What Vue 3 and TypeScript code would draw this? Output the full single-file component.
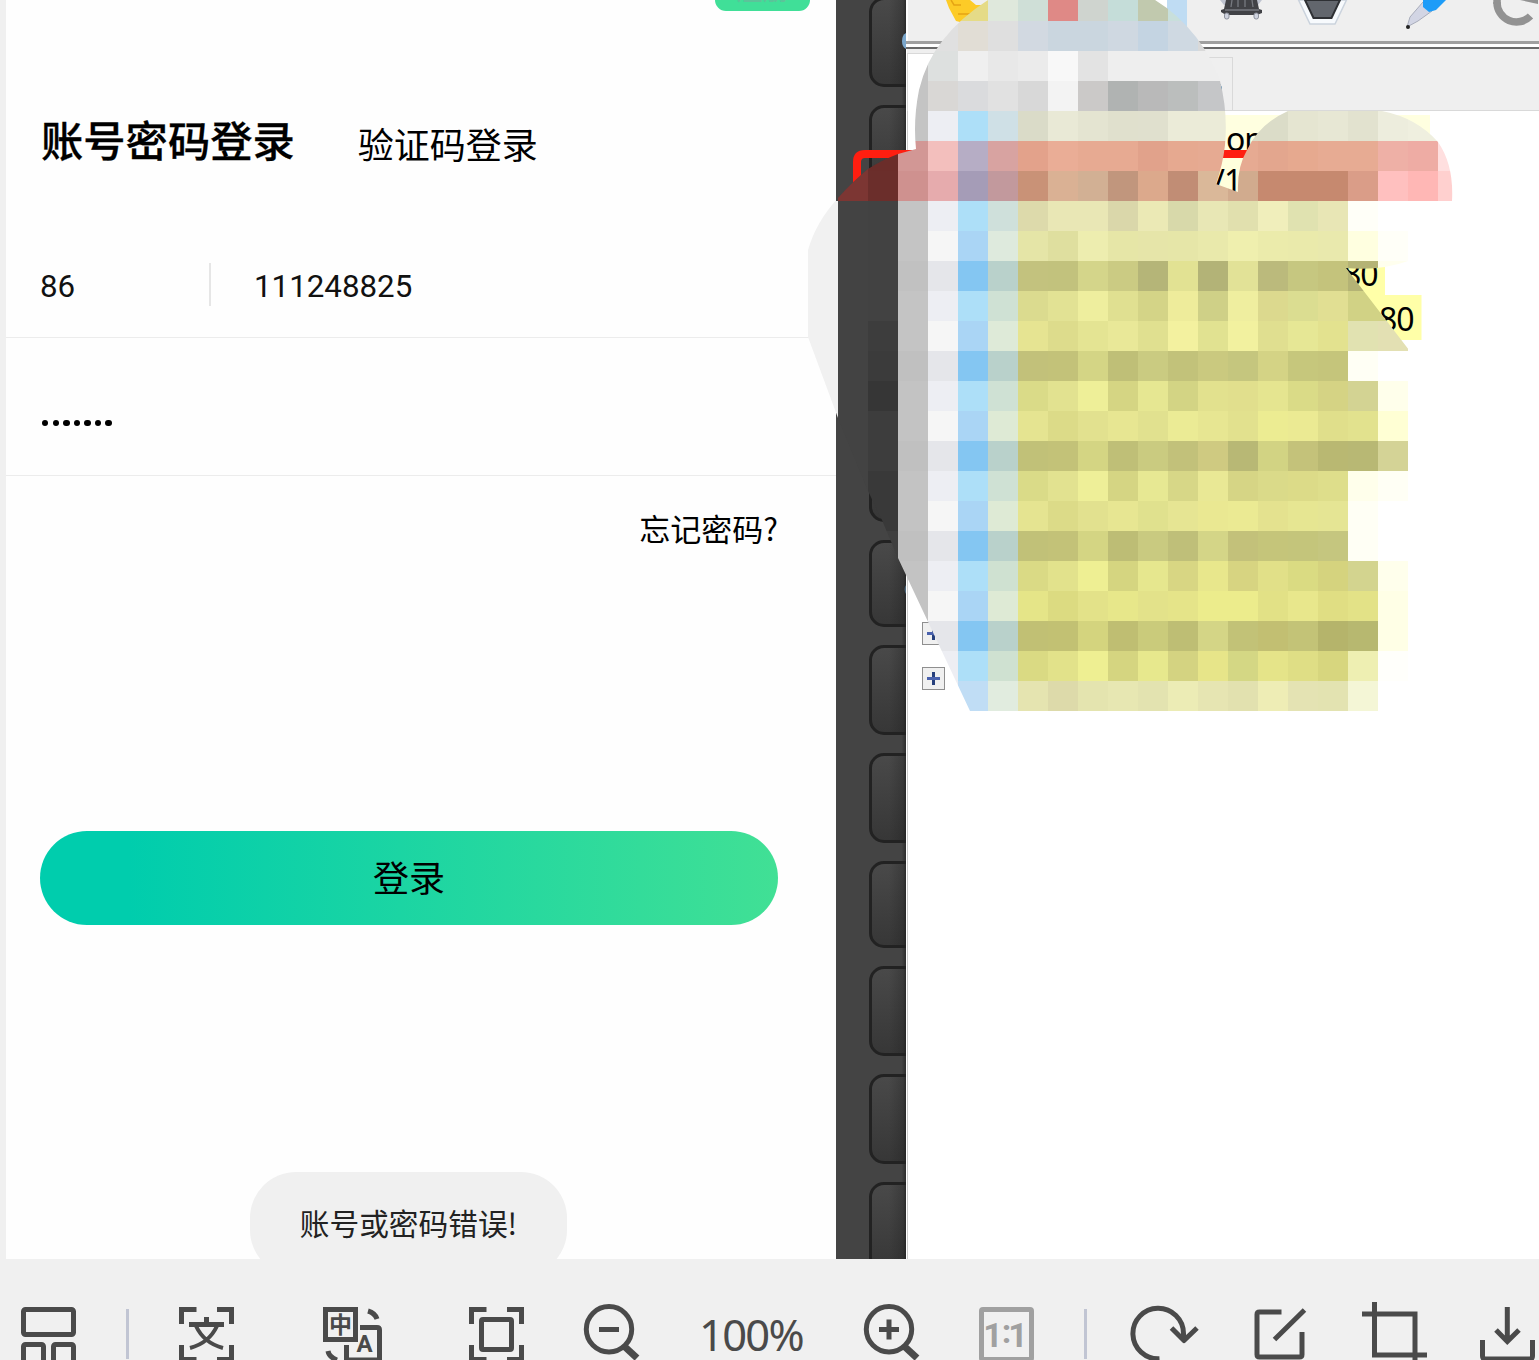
<script setup lang="ts">
interface Tool {
  name: string
  x: number
  w: number
}

const tools: Tool[] = [
  { name: 'layout', x: 18, w: 62 },
  { name: 'sep', x: 126, w: 3 },
  { name: 'scan', x: 176, w: 62 },
  { name: 'translate', x: 320, w: 66 },
  { name: 'fit', x: 466, w: 62 },
  { name: 'out', x: 582, w: 60 },
  { name: 'zoom', x: 694, w: 114 },
  { name: 'in', x: 862, w: 60 },
  { name: 'actual', x: 976, w: 62 },
  { name: 'sep', x: 1084, w: 3 },
  { name: 'rotate', x: 1128, w: 74 },
  { name: 'edit', x: 1250, w: 60 },
  { name: 'crop', x: 1360, w: 70 },
  { name: 'save', x: 1477, w: 62 },
]
const gapBefore = (i: number): number =>
  i === 0 ? tools[0].x : tools[i].x - tools[i - 1].x - tools[i - 1].w

const keys: number[] = [90, 90, 90, 90, 93, 87, 90, 90, 87, 90, 90, 90]

// Mosaic rows, top to bottom: first column x, then one colour per 30px cell.
const rows: [number, string][] = [
  [958, 'e5db87 dfe8dc cfdfd7 df8986 cfd4cf c5ddd9 c1c9ae c8dfdb'],
  [928, 'e0e0e0 e1ddd5 dfdfdf d2d9e1 cad6df cad6df cfd8e1 c4d4e2 cfd9e2 d9d9d9'],
  [898, 'c4c4c4 dde0df efefef e8e8e8 ebebeb f8f8f8 e3e3e3 eeeeee eeeeee eeeeee eeeeee'],
  [898, 'c4c4c4 d9d7d5 dadbdd e1e1e1 d8d8d8 f3f3f3 cbc9c8 b0b3b2 b9b9b9 bbbebd c5c6c8'],
  [898, 'c4c4c4 edeef3 addff8 cfe0e6 dadbc8 e9e9d6 e4e4d1 e0e0cd e0e0ce ebebd8 ebebd8 dbdcc8 dbdcc8 e5e5d1 e7e7d4 e2e2cf ededdd efefdf efefdf'],
  [838, '7c3633 6b2d2a d29795 f3bfbd b6adc5 d8a3a1 e3a28b eaad96 e7aa92 e7aa92 e1a28b e6a990 e6aa92 e6aa92 e3a68e e6a98f e7ab93 e7ab93 eeb0a6 eeaca4 ffdfdf'],
  [838, '7c3633 6b2e2b cf918f e6abad a59cb7 c2999d c99277 dab194 d2b094 c1967d dca98c c18d75 dab899 d1ab8e c6896f c6896f c6896f da9d88 ffc0bf ffb7b5 ffd0cf'],
  [808, 'f1f1f1 434343 424242 c4c4c4 edeef3 addff8 cfe0db dddaab e9e7b5 e9e7b5 dad7aa ebe9b5 d8d9aa e8e7b5 e1e0ae f0eebb e0e2b0 e8e6b5 fffff8 ffffff'],
  [808, 'f1f1f1 434343 424242 c4c4c4 f6f6f6 aad5f5 deeadd e5e5a7 dfdf9f ededaf e6e6a7 e6e5a9 e6e6a8 e9e9ab efefae ebebab eaeaab e9e9ad ffffe0 fffff8'],
  [808, 'f1f1f1 434343 424242 c1c1c1 e5e6ea 84c6f2 b9d1cb c3c27e c2c27d d4d58a cbcb83 b5b578 e2e293 b3b377 e2e297 bbba7c c6c780 c4c37c b4b375 ffffee'],
  [808, 'f1f1f1 434343 424242 c4c4c4 edeef3 addff8 cfe1d4 dbdb8f e2e294 eeee9e e0e091 d4d487 eeec9b cfd087 efee9f dcd98e dbdd91 e1df93 d1d285 d1d285'],
  [808, 'f1f1f1 434343 3d3d3d c4c4c4 f6f6f6 aad5f5 deead8 e6e492 dddc8c e4e493 e9e898 e0e090 f3f19f e1e291 f2f19f e0df90 e6e795 e3e28f e1e2b1 e3e0b3'],
  [808, 'f1f1f1 434343 3b3b3b c0c0c0 e5e6ea 84c6f2 b9d1cb c2c17a c3c279 d4d585 bfbf77 cacb81 c2c27a cac97f c5c67e d4d385 c6c77c c5c57b fffff5 ffffff'],
  [808, 'f1f1f1 434343 363636 c3c3c3 edeef3 addff8 cfe1d4 dadb88 e2e290 eeef98 d5d583 e6e792 d3d484 e2e18e e1df8d e5e590 dadb87 d5d384 d3d393 ffffeb'],
  [808, 'f1f1f1 434343 3d3d3d c3c3c3 f6f6f6 aad5f5 deead5 e5e491 dcdb88 e2e18f e7e692 e1e18f ebeb95 e7e692 e2e18e ecec92 ebea93 e0df8b e2e28e ffffd4'],
  [838, '434343 3d3d3d c0c0c0 e5e6ea 84c6f2 b9d1cb c1c178 c3c278 d4d583 bfbf77 cacb80 c2c17a cfca81 b8b875 d2d383 c4c27a b9b872 b8b874 d4d396'],
  [838, '434343 393939 c3c3c3 edeef3 addff8 cfe1d4 dadb88 e2e290 eeef98 d5d583 e7e893 d7d787 e9e895 d6d585 dada89 dcdb88 dede8b ffffeb fffff5'],
  [838, '434343 393939 c3c3c3 f6f6f6 aad5f5 deead5 e5e491 dcdb88 e2e18f e7e692 e0e18e e6e593 eae892 ebea93 e4e28f e6e692 e5e594 fffff5 ffffff'],
  [838, '434343 3f3f3f c0c0c0 e5e6ea 84c6f2 b9d1cb c1c178 c3c278 d4d583 bdbd75 c9ca80 bfbf79 d4d587 c3c17a c5c57a c4c57b c5c67f fffff5 ffffff'],
  [898, 'c3c3c3 edeef3 addff8 cfe1d1 dada85 e2e28c eeef93 d5d580 e6e78e d8d683 e8e78c d7d481 e1e088 dadb82 d5d37e d3d48f ffffec'],
  [898, 'c3c3c3 f6f6f6 aad5f5 deead5 e5e588 dcdb81 e3e289 e7e78a e3e28a e5e489 ecec8c ecec8c e2e186 e8e78c e0de83 e3e287 ffffe6'],
  [898, 'c3c3c3 e5e6ea 84c6f2 b9d1cb c1c074 c2c173 d4d47e bfbe72 cacb7b bebe74 d4d586 c2c277 c2bf72 c3c377 b5b46b b7b870 ffffe6'],
  [928, 'edeef3 addff8 cfe1d1 dada83 e2e28a eeef92 d5d580 e7e88d d4d381 e7e589 d4d784 e5e489 dfde85 d7d67e eeefb2 fffffb'],
  [928, 'edeef3 c0ddf5 e1ecdf e5e4b0 dddaaa e4e4af e7e7b2 e3e3b0 ececb5 e6e5b2 e2e1af eeedb5 e4e3b3 e3e3b1 f4f6d6 ffffff'],
]
const cells = rows.flatMap(([x0, list], r) =>
  list.split(' ').map((c, i) => ({ x: x0 + i * 30, y: r * 30 - 9, fill: '#' + c })),
)
</script>

<template>
  <div class="viewer">
    <main class="stage">
      <section class="phone">
        <div class="top"><div class="chip"><span>注册</span></div></div>
        <div class="tabs">
          <span class="tab on">账号密码登录</span>
          <span class="tab">验证码登录</span>
        </div>
        <div class="field account">
          <span class="code">86</span>
          <i class="rule"></i>
          <span class="number">111248825</span>
        </div>
        <div class="field password"><i v-for="n in 7" :key="n" class="dot"></i></div>
        <div class="forgot">忘记密码?</div>
        <button class="login">登录</button>
        <div class="toast">账号或密码错误!</div>
      </section>

      <aside class="strip">
        <div v-for="(h, i) in keys" :key="i" class="key" :style="{ height: h + 'px' }"></div>
      </aside>

      <section class="app">
        <svg class="appbar" viewBox="906 0 633 41" width="633" height="41">
          <path d="M906 0h2v41h-2z" fill="#fff" />
          <path d="M946 0l3 8 7 13 8 2 20-18-8 0-6-5z" fill="#fdcb27" />
          <path d="M951 0l3 5 7 0M958 14l12 0" fill="none" stroke="#e5a414" stroke-width="1.5" />
          <path d="M1167 0h20v41h-20z" fill="#bfdcf3" />
          <path d="M1155 0h12v9z" fill="#fff" />
          <path d="M1220 0l4 5h34l4-5z" fill="#bfc4d0" />
          <path d="M1226 0h31l2 9 3 1v3l-5 2h-31l-5-3v-2l3-1z" fill="#414246" />
          <path d="M1232 0l-1 7M1238 0v7M1245 0v7M1252 0l1 7M1225 10h34" stroke="#777a80" stroke-width="1.3" />
          <rect x="1224.500" y="13" width="4.500" height="6" rx="2" fill="#cfd3df" stroke="#8c909b" />
          <rect x="1254" y="13" width="4.500" height="6" rx="2" fill="#cfd3df" stroke="#8c909b" />
          <path d="M1298.500 0l11.500 24h25L1346.500 0z" fill="#f7fafd" stroke="#cbd3dd" stroke-width="1.500" />
          <path d="M1305 0l8.500 18h18l8.500-18z" fill="#62666d" stroke="#2e3034" stroke-width="2" />
          <path d="M1407 27l3-10 13-15 9 9-14 10z" fill="#d2d5e4" stroke="#a9adbb" />
          <path d="M1423 0v7l6 5 7-2 10-10z" fill="#1d9cf8" />
          <circle cx="1408" cy="27" r="2" fill="#222" />
          <path d="M1497 2a19.500 19.500 0 0 0 33.500 14" fill="none" stroke="#929292" stroke-width="7.500" />
          <path d="M1493.300 0h7.500v4h-7.500zM1520 0h18v4z" fill="#929292" />
        </svg>
        <div class="splitter"></div>
        <div class="doctabs">
          <div class="doctab active"></div>
          <div class="doctab"></div>
        </div>
        <div class="document"></div>
      </section>

      <svg class="overlay" viewBox="800 0 739 760" width="739" height="760">
        <defs>
          <clipPath id="smear">
            <path
              d="M808 250Q816 222 838 198Q853 181 868 169Q882 160 898 154L916 149Q913 120 919 90Q926 61 943 40Q960 18 988 0H1155Q1178 14 1196 37Q1212 58 1220 81Q1228 112 1225 145Q1223 164 1216 184L1238 192Q1237 167 1247 150Q1259 124 1288 111H1382Q1417 118 1438 142Q1454 165 1452 201H1408V261Q1381 271 1346 268L1409 350V711H970L898 558L882 520L868 491L838 418L808 337Z"
            />
          </clipPath>
        </defs>
        <rect x="1220" y="115" width="210" height="42" fill="#ffffe0" />
        <rect x="1210" y="157" width="60" height="40" fill="#ffffdc" />
        <rect x="1340" y="262" width="45" height="33" fill="#ffffa8" />
        <rect x="1340" y="295" width="81.500" height="45" fill="#ffffa8" />
        <g class="code-text">
          <text x="1226" y="151">on</text>
          <text x="1213" y="193">/1</text>
          <text x="1343" y="286">80</text>
          <text x="1379" y="331">80</text>
        </g>
        <path d="M857 210V162q0-8 8-8H1260" fill="none" stroke="#ff1e10" stroke-width="8" />
        <path d="M1219 83q4 3 2 9z" fill="#07588f" />
        <path d="M906 33q-4 2-4 8t4 8z" fill="#7ba7cc" />
        <path d="M906 585q-3 4 0 9zM904.500 986h1.500v44h-1.500z" fill="#4b6578" />
        <g v-for="y in [622, 667]" :key="y">
          <rect x="922.500" :y="y + 0.500" width="22" height="22" fill="#f0f0f0" stroke="#8f8f8f" />
          <path :d="`M933.500 ${y + 5}v13`" stroke="#26407c" stroke-width="3" />
          <path :d="`M927 ${y + 11.500}h13`" stroke="#4a62ad" stroke-width="3" />
        </g>
        <g clip-path="url(#smear)" shape-rendering="crispEdges">
          <rect v-for="(c, i) in cells" :key="i" :x="c.x" :y="c.y" width="30" height="30" :fill="c.fill" />
        </g>
      </svg>
    </main>

    <footer class="toolbar">
      <template v-for="(t, i) in tools" :key="i">
        <i v-if="t.name === 'sep'" class="sep" :style="{ marginLeft: gapBefore(i) + 'px' }"></i>
        <span v-else-if="t.name === 'zoom'" class="zoom" :style="{ marginLeft: gapBefore(i) + 'px' }">100%</span>
        <svg
          v-else
          class="icon"
          :class="t.name"
          :viewBox="`${t.x} 1300 ${t.w} 60`"
          :width="t.w"
          height="60"
          :style="{ marginLeft: gapBefore(i) + 'px' }"
        >
          <g v-if="t.name === 'layout'">
            <rect x="23.500" y="1309.500" width="50" height="25" rx="2" />
            <rect x="23.500" y="1344.500" width="20" height="20" rx="2" />
            <rect x="53.500" y="1344.500" width="20" height="20" rx="2" />
          </g>
          <g v-else-if="t.name === 'scan'">
            <path d="M181.500 1324V1309.500H196.500M217 1309.500H231.500V1324M181.500 1345V1359.500H196.500M217 1359.500H231.500V1345" />
            <path d="M189 1324.500H224M206.500 1317V1324" />
            <path d="M196 1326Q204 1343 223 1348M217 1326Q209 1343 190 1348" stroke-width="4" />
          </g>
          <g v-else-if="t.name === 'translate'">
            <rect x="325.500" y="1309.500" width="30" height="30" />
            <path d="M360 1327.500H377Q379.500 1327.500 379.500 1330V1360H346.500V1345" />
            <path d="M368 1311Q375 1313 377 1319M328 1351Q329 1357 337 1360" />
            <text class="zh" x="340.500" y="1333">中</text>
            <text class="latin" x="364.500" y="1352">A</text>
          </g>
          <g v-else-if="t.name === 'fit'">
            <path d="M471.500 1324V1309.500H486.500M507 1309.500H521.500V1324M471.500 1345V1359.500H486.500M507 1359.500H521.500V1345" />
            <rect x="481.500" y="1319.500" width="30" height="30" rx="1.500" />
          </g>
          <g v-else-if="t.name === 'out'">
            <circle cx="609" cy="1329.300" r="22.700" />
            <path d="M599 1329.500H619" />
            <path d="M624.500 1346.500L637 1358" stroke-width="7" />
          </g>
          <g v-else-if="t.name === 'in'">
            <circle cx="889" cy="1329.300" r="22.700" />
            <path d="M879 1329.500H899M889 1319.500V1339.500" />
            <path d="M904.500 1346.500L917 1358" stroke-width="7" />
          </g>
          <g v-else-if="t.name === 'actual'">
            <rect x="981.500" y="1309.500" width="50" height="50" rx="1.500" />
            <text class="ratio" x="993" y="1346.500">1</text>
            <text class="ratio" x="1006.500" y="1343">:</text>
            <text class="ratio" x="1018" y="1346.500">1</text>
          </g>
          <g v-else-if="t.name === 'rotate'">
            <path d="M1159.500 1358.800A25.300 25.300 0 1 1 1183.500 1333.500L1184 1341M1171.500 1328L1184 1340.500L1197 1328" />
          </g>
          <g v-else-if="t.name === 'edit'">
            <path d="M1281.500 1312H1259.500Q1257 1312 1257 1314.500V1354.500Q1257 1357 1259.500 1357H1299.500Q1302 1357 1302 1354.500V1332M1274.500 1339.500L1304.500 1310" />
          </g>
          <g v-else-if="t.name === 'crop'">
            <path d="M1362 1314H1415V1360M1374.500 1302V1355H1427" />
          </g>
          <g v-else>
            <path d="M1507.300 1307V1341M1496 1330L1507.300 1341.500L1519 1330M1482.500 1340V1356Q1482.500 1359 1485.500 1359H1529.500Q1532.500 1359 1532.500 1356V1340" />
          </g>
        </svg>
      </template>
    </footer>
  </div>
</template>

<style>
body {
  background: #f0f0f0;
  overflow: hidden;
}
</style>

<style scoped>
.viewer {
  width: 1539px;
  height: 1360px;
  display: flex;
  flex-direction: column;
  overflow: hidden;
  background: #f0f0f0;
  font-family: Roboto, 'Noto Sans CJK SC', sans-serif;
}
.stage {
  position: relative;
  display: flex;
  flex: none;
  height: 1259px;
  padding-left: 6px;
  overflow: hidden;
}
.phone {
  width: 830px;
  height: 1259px;
  overflow: hidden;
  box-sizing: border-box;
  display: flex;
  flex-direction: column;
  background: #fefefe;
  color: #000;
}
.phone > * {
  flex: none;
}
.top {
  height: 108px;
  padding-left: 709px;
}
.chip {
  width: 95px;
  height: 11px;
  border-radius: 0 0 11px 11px;
  background: #40df98;
  color: #5cc39a;
  font-size: 27px;
  line-height: 0;
  text-align: center;
  overflow: hidden;
}
.chip span {
  display: block;
  margin-top: -9px;
}
.tabs {
  display: flex;
  height: 127px;
  padding-left: 35px;
  gap: 63px;
}
.tab {
  font: 400 36px/70px 'Noto Sans CJK SC', sans-serif;
}
.tab.on {
  font-size: 42.3px;
  font-weight: 500;
  line-height: 61px;
  -webkit-text-stroke: 0.3px #000;
}
.field {
  box-sizing: border-box;
  display: flex;
  align-items: center;
  padding-left: 34px;
  border-bottom: 1px solid #ececec;
  color: #111;
}
.account {
  height: 103px;
  font-size: 31.3px;
}
.code {
  width: 169px;
}
.rule {
  width: 2px;
  height: 43px;
  margin: 0 43px 3px 0;
  background: #e6e6e6;
}
.password {
  height: 138px;
  padding: 33px 0 0 36px;
  gap: 4.200px;
}
.dot {
  width: 6.400px;
  height: 6.400px;
  border-radius: 50%;
  background: #000;
}
.forgot {
  height: 355px;
  padding-right: 58px;
  text-align: right;
  font: 31px/103px 'Noto Sans CJK SC', sans-serif;
}
.login {
  display: block;
  width: 738px;
  height: 94px;
  margin-left: 34px;
  padding: 0 0 4px;
  border: 0;
  border-radius: 47px;
  background: linear-gradient(90deg, #00cdad 12%, #41e095 100%);
  color: #000;
  font: 36px/90px 'Noto Sans CJK SC', sans-serif;
}
.toast {
  width: 317px;
  height: 104px;
  margin: 247px 0 0 244px;
  border-radius: 46px;
  background: #f0f0f0;
  color: #222;
  text-align: center;
  font: 29.700px/102px 'Noto Sans CJK SC', sans-serif;
}
.strip {
  width: 70px;
  display: flex;
  flex-direction: column;
  gap: 18px;
  margin-top: -3px;
  height: 1262px;
  overflow: hidden;
  background: linear-gradient(90deg, #444 94%, #2d2d2d 100%);
}
.key {
  box-sizing: border-box;
  flex: none;
  width: 100px;
  margin-left: 33px;
  border: 3px solid #222;
  border-radius: 15px;
  background: linear-gradient(90deg, transparent 18%, rgba(30, 30, 30, 0.3) 33%, rgba(25, 25, 25, 0.7) 37%),
    linear-gradient(#494949, #373737);
}
.app {
  width: 633px;
  display: flex;
  flex-direction: column;
  background: #fff;
}
.appbar {
  display: block;
  flex: none;
  background: #efefef;
}
.splitter {
  height: 3px;
  border-top: 3px solid #a0a0a0;
  border-bottom: 2px solid #696969;
}
.doctabs {
  display: flex;
  align-items: flex-end;
  height: 61px;
  margin-left: 1px;
  border-bottom: 1px solid #d9d9d9;
  background: #efefef;
}
.doctab {
  width: 165px;
  height: 53px;
  box-sizing: border-box;
  border: 1px solid #d9d9d9;
  border-bottom: 0;
}
.doctab.active {
  width: 161px;
  height: 58px;
  margin-bottom: -1px;
  background: #fff;
}
.document {
  flex: 1;
  margin-left: 1px;
  border-left: 1px solid #ccc;
  background: #fff;
}
.overlay {
  position: absolute;
  left: 800px;
  top: 0;
}
.code-text {
  font: 32px 'Noto Sans', sans-serif;
  letter-spacing: -1px;
}
.toolbar {
  display: flex;
  height: 60px;
  padding-top: 41px;
}
.icon {
  flex: none;
  fill: none;
  stroke: #4a4a4a;
  stroke-width: 5;
}
.icon.rotate,
.icon.edit {
  stroke-linejoin: round;
}
.icon.actual {
  stroke: #a0a0a0;
}
.icon text {
  stroke: none;
  fill: #4a4a4a;
  text-anchor: middle;
  font-weight: 700;
}
.zh {
  font-size: 23px;
  font-family: 'Noto Sans CJK SC', sans-serif;
}
.latin {
  font-size: 24px;
}
.icon .ratio {
  fill: #a0a0a0;
  font-size: 34px;
}
.sep {
  flex: none;
  width: 3px;
  height: 50px;
  margin-top: 9px;
  background: #c1c5d3;
}
.zoom {
  flex: none;
  width: 114px;
  color: #4a4a4a;
  text-align: center;
  white-space: nowrap;
  font: 43.500px/69px 'Noto Sans', sans-serif;
  letter-spacing: -1.700px;
}
</style>
